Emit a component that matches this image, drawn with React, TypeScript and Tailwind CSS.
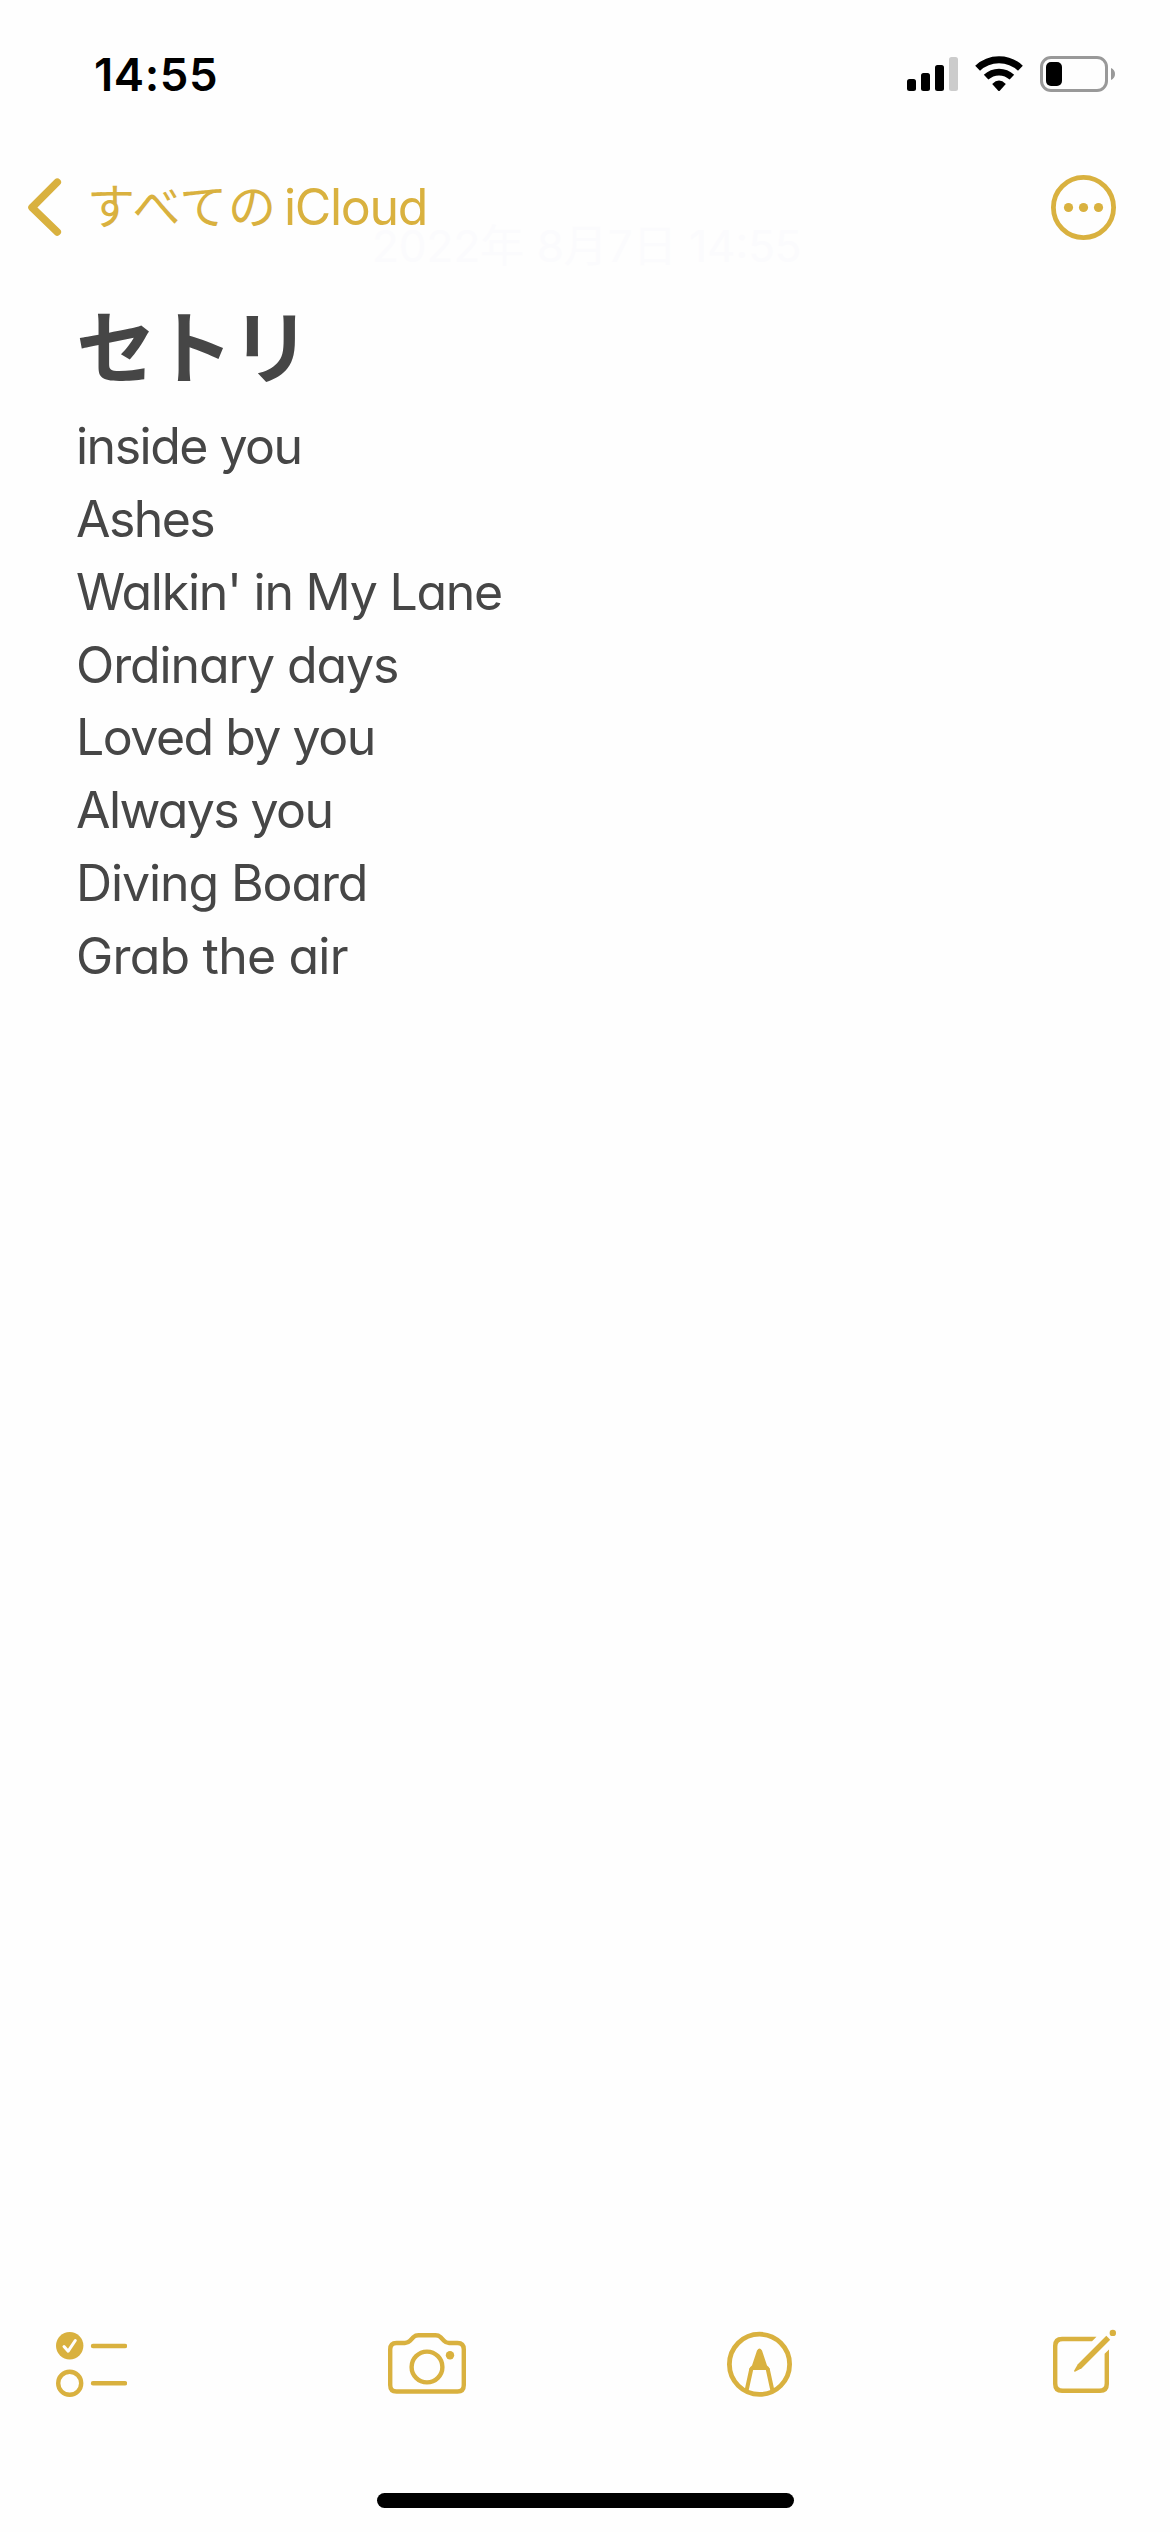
import type { ReactNode } from "react";

const songs = [
  { title: "inside you", tracking: "tracking-[-1.5px]" },
  { title: "Ashes", tracking: "tracking-[-1.6px]" },
  { title: "Walkin' in My Lane", tracking: "tracking-[-1.25px]" },
  { title: "Ordinary days", tracking: "tracking-[-1.1px]" },
  { title: "Loved by you", tracking: "tracking-[-1.5px]" },
  { title: "Always you", tracking: "tracking-[-1.6px]" },
  { title: "Diving Board", tracking: "tracking-[-1.1px]" },
  { title: "Grab the air", tracking: "tracking-[-0.8px]" },
];

export default function App() {
  return (
    <div className="flex h-[2532px] w-[1170px] flex-col overflow-hidden bg-[#fefefe] pb-[24px] font-['Inter','Noto_Sans_CJK_JP',sans-serif]">
      <StatusBar />
      <NavBar />
      <Note />
      <Toolbar />
      <div className="mx-auto mt-[94px] h-[15px] w-[417px] shrink-0 rounded-full bg-black" />
    </div>
  );
}

function StatusBar() {
  return (
    <div className="flex h-[141px] shrink-0 items-start justify-between pr-[55px] pl-[94px]">
      <span className="mt-[48px] text-[45.5px] leading-[54px] font-semibold tracking-[0.6px] text-black">14:55</span>
      <div className="mt-[55px] flex h-[37px] items-start">
        <svg width="51" height="37" viewBox="0 0 51 37">
          <rect x="0" y="24" width="9" height="12" rx="2.5" />
          <rect x="14" y="18" width="9" height="18" rx="2.5" />
          <rect x="28" y="10" width="9" height="26" rx="2.5" />
          <rect x="42" y="2" width="9" height="34" rx="2.5" fill="#cccccc" />
        </svg>
        <svg className="ml-[17px]" width="48" height="37" viewBox="0 0 48 37">
          <path d="M2.6 13.2A31 31 0 0 1 45.4 13.2" fill="none" stroke="#000" strokeWidth="7" />
          <path d="M11.1 22.2A18.8 18.8 0 0 1 36.9 22.2" fill="none" stroke="#000" strokeWidth="6.6" />
          <path d="M17.2 29Q24 22.2 30.8 29L25 35.4Q24 36.4 23 35.4Z" />
        </svg>
        <svg className="ml-[17px]" width="75" height="37" viewBox="0 0 75 37">
          <rect x="1.5" y="2.5" width="65" height="33" rx="9.5" fill="none" stroke="#999" strokeWidth="3" />
          <rect x="6" y="7" width="16" height="24" rx="5" />
          <path d="M71 13Q75 14.8 75 19T71 25Z" fill="#999" />
        </svg>
      </div>
    </div>
  );
}

function NavBar() {
  return (
    <header className="relative flex h-[132px] shrink-0 items-start justify-between pr-[54px] pl-[27px] text-[#d9b13f]">
      {/* note date, faded out while it slides under the bar */}
      <span className="absolute top-[77px] left-[372px] text-[44px] leading-[56px] whitespace-nowrap text-[#fbfbfd]">
        2022年 8月7日 14:55
      </span>
      <div className="relative flex items-start">
        <svg className="mt-[36px]" width="35" height="60" viewBox="0 0 35 60" fill="none">
          <path d="M30.3 5.2L5 30.5L30.3 55" stroke="currentColor" strokeWidth="7.5" strokeLinecap="round" strokeLinejoin="round" />
        </svg>
        <span className="mt-[36px] ml-[25px] text-[48px] leading-[60px] tracking-[0.8px]">すべての</span>
        <span className="mt-[36px] ml-[7px] text-[50px] leading-[60px] tracking-[-1.3px]">iCloud</span>
      </div>
      <svg className="mt-[34px]" width="65" height="65" viewBox="0 0 65 65" fill="currentColor">
        <circle cx="32.5" cy="32.5" r="30.1" fill="none" stroke="currentColor" strokeWidth="4.8" />
        <circle cx="17.5" cy="32.5" r="4.6" />
        <circle cx="32.5" cy="32.5" r="4.6" />
        <circle cx="47.5" cy="32.5" r="4.6" />
      </svg>
    </header>
  );
}

function Note() {
  return (
    <main className="flex-1 pt-[10px] pl-[76px] text-[#464646]">
      <h1 className="h-[127px] font-['Noto_Sans_CJK_JP',sans-serif] text-[80px] leading-[119px] font-bold tracking-[-2.5px]">
        セトリ
      </h1>
      <ul className="[font-feature-settings:'cv11']">
        {songs.map((song) => (
          <li key={song.title} className={`h-[72.87px] text-[50px] leading-[73px] whitespace-nowrap ${song.tracking}`}>
            {song.title}
          </li>
        ))}
      </ul>
    </main>
  );
}

function ToolIcon({ width, box, children }: { width: number; box: string; children: ReactNode }) {
  return (
    <svg
      width={width}
      height="70"
      viewBox={box}
      fill="none"
      stroke="currentColor"
      strokeWidth="4.4"
      strokeLinecap="round"
      strokeLinejoin="round"
    >
      {children}
    </svg>
  );
}

function Toolbar() {
  return (
    <nav className="flex h-[70px] shrink-0 justify-between pr-[54px] pl-[56px] text-[#d9b13f]">
      {/* checklist */}
      <ToolIcon width={71} box="0 0 71 70">
        <circle cx="13.7" cy="16.7" r="13.7" fill="currentColor" stroke="none" />
        <path d="M8 17.5L12.2 22.2L19.3 11.5" stroke="#fefefe" strokeWidth="3" />
        <circle cx="13.7" cy="54.3" r="11.5" />
        <path d="M37 17H69M37 54.3H69" />
      </ToolIcon>

      {/* camera */}
      <ToolIcon width={78} box="0 0 78 70">
        <path d="M8.5 14H17Q20 14 22 11.8L25.6 8Q27.5 6.2 30.5 6.2H47.5Q50.5 6.2 52.4 8L56 11.8Q58 14 61 14H69.5Q75.8 14 75.8 20.5V56Q75.8 62.5 69.5 62.5H8.5Q2.2 62.5 2.2 56V20.5Q2.2 14 8.5 14Z" />
        <circle cx="39" cy="38" r="15.4" />
        <circle cx="62" cy="26.3" r="4.2" fill="currentColor" stroke="none" />
      </ToolIcon>

      {/* markup pen */}
      <ToolIcon width={65} box="0 0 65 70">
        <circle cx="32.5" cy="35.3" r="30.1" strokeWidth="4.8" />
        <path d="M30 21.5Q32.5 17.5 35 21.5L40 36.5Q42.5 37.5 42.8 41H22.2Q22.5 37.5 25 36.5Z" fill="currentColor" stroke="none" />
        <path d="M24.4 39.5L19.6 61.5M40.6 39.5L45.4 61.5" strokeWidth="4" strokeLinecap="butt" />
      </ToolIcon>

      {/* compose */}
      <ToolIcon width={63} box="0 0 63 70">
        <path d="M43.5 7.8H9Q0 7.8 0 16.8V55Q0 64 9 64H47Q56 64 56 55V20.5L51.6 24.8V54.2Q51.6 59.6 46.2 59.6H9.8Q4.4 59.6 4.4 54.2V17.6Q4.4 12.2 9.8 12.2H39Z" fill="currentColor" stroke="none" />
        <path d="M53.3 6.8L57.2 10.7L28.7 39.2L22 42.8Q20.6 42.8 21.2 41.4L24.8 35.3Z" fill="currentColor" stroke="none" />
        <circle cx="59.8" cy="3.9" r="3.2" fill="currentColor" stroke="none" />
      </ToolIcon>
    </nav>
  );
}
